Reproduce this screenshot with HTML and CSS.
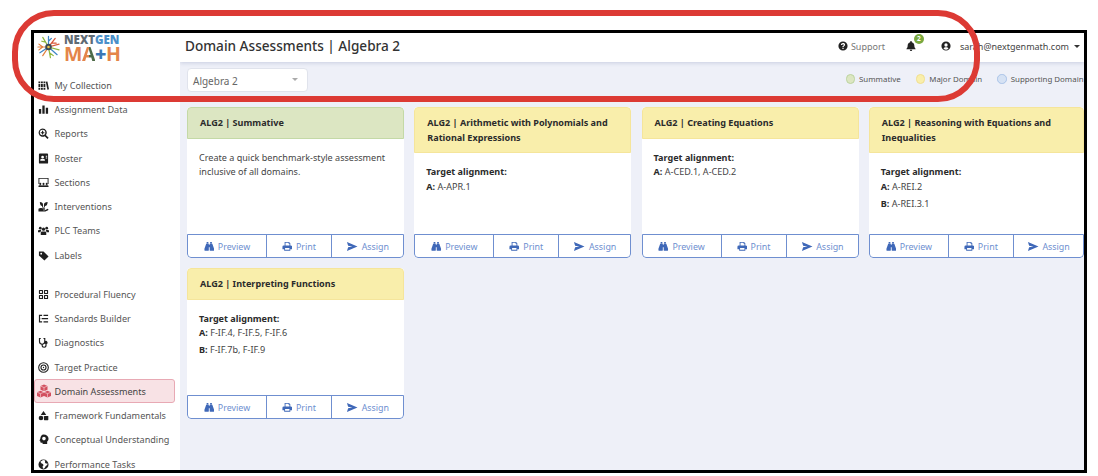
FILE: index.html
```html
<!DOCTYPE html>
<html lang="en">
<head>
<meta charset="utf-8">
<title>Domain Assessments | Algebra 2</title>
<link rel="stylesheet" href="styles.css">
</head>
<body>
<svg class="defs" width="0" height="0" aria-hidden="true">
  <symbol id="i-binoculars" viewBox="0 0 24 24"><path d="M6 2h4v3.500H6zM14 2h4v3.500h-4zM5 6.500h6V21a1 1 0 0 1-1 1H2a1 1 0 0 1-1-1v-3.500zM13 6.500h6l4 11V21a1 1 0 0 1-1 1h-8a1 1 0 0 1-1-1zM11 8.500h2V14h-2z"/></symbol>
  <symbol id="i-print" viewBox="0 0 24 24"><path fill-rule="evenodd" d="M6 2h10l3 3v5h1a3 3 0 0 1 3 3v6h-4v3H5v-3H1v-6a3 3 0 0 1 3-3h2zm2 2v6h9V6h-2V4zM7 16v4h10v-4z"/></symbol>
  <symbol id="i-plane" viewBox="0 0 24 24"><path d="M1 2l23 10L1 22l2.500-8.500L13 12l-9.500-1.500z"/></symbol>
</svg>

<div class="frame">
  <aside class="sidebar">
    <div class="logo">
      <svg class="logo-mark" viewBox="0 0 24 24" aria-hidden="true">
        <g stroke-width="1.300" stroke-linecap="round" fill="none">
          <path stroke="#e2803f" d="M12 12L1 12M6 12L2 9M6 12L2 15M12 12L6 21"/>
          <path stroke="#8fb63f" d="M12 12L6 2M9 7L5 6M12 12L14 23M13 18L17 21M12 12L23 15"/>
          <path stroke="#3f86c6" d="M12 12L12 1M12 6L15 3M12 12L3 18M12 12L21 20"/>
          <path stroke="#d9583a" d="M12 12L19 3M15 8L20 8M12 12L23 9"/>
        </g>
        <circle cx="12" cy="12" r="3.400" fill="#3a4a55"/>
        <circle cx="12" cy="12" r="1.400" fill="#e8c24a"/>
      </svg>
      <div class="logo-text">
        <div class="logo-top"><span class="lg-gray">NEXT</span><span class="lg-blue">GEN</span></div>
        <div class="logo-bottom">M<span class="lg-a">A</span><span class="lg-plus">+</span>H</div>
      </div>
    </div>

    <nav class="nav">
      <a class="nav-item"><svg class="nav-icon" viewBox="0 0 24 24"><path d="M1 3h4v18H1zM6.500 3h4v18h-4zM12 3h4v18h-4z"/><path d="M17 4l3.500-1 3.500 17-3.500 1z"/><path class="knock" d="M0 7h17v1.500H0zM0 16h17v1.500H0z"/></svg>My Collection</a>
      <a class="nav-item"><svg class="nav-icon" viewBox="0 0 24 24"><path d="M2 11h5v10H2zM9.500 3h5v18h-5zM17 8h5v13h-5z"/></svg>Assignment Data</a>
      <a class="nav-item"><svg class="nav-icon" viewBox="0 0 24 24"><path fill-rule="evenodd" d="M10 1a9 9 0 0 1 7.200 14.400l6 6-2.500 2.500-6-6A9 9 0 1 1 10 1zm0 3a6 6 0 1 0 0 12 6 6 0 0 0 0-12z"/><path d="M6 9h8v2.500H6zM8.800 6h2.500v8H8.800z"/></svg>Reports</a>
      <a class="nav-item"><svg class="nav-icon" viewBox="0 0 24 24"><path fill-rule="evenodd" d="M4 1h16a2 2 0 0 1 2 2v18a2 2 0 0 1-2 2H4a2 2 0 0 1-2-2V3a2 2 0 0 1 2-2zm6 5a3 3 0 1 0 0 6 3 3 0 0 0 0-6zm-5 11h10v-2a2 2 0 0 0-2-2H7a2 2 0 0 0-2 2zM17 6v2h3V6zm0 4v2h3v-2z"/></svg>Roster</a>
      <a class="nav-item"><svg class="nav-icon" viewBox="0 0 24 24"><path fill-rule="evenodd" d="M1 2h22v13h-2V4H3v11H1z"/><circle cx="5" cy="15" r="2.200"/><circle cx="12" cy="15" r="2.200"/><circle cx="19" cy="15" r="2.200"/><path d="M1 22v-2a2 2 0 0 1 2-2h4a2 2 0 0 1 2 2v2zM8.500 22v-2a2 2 0 0 1 2-2h3a2 2 0 0 1 2 2v2zM15 22v-2a2 2 0 0 1 2-2h4a2 2 0 0 1 2 2v2z"/></svg>Sections</a>
      <a class="nav-item"><svg class="nav-icon" viewBox="0 0 24 24"><path d="M4 2c4 0 7 2 7 6v5h2V8c0-4 3-5 8-6 0 5-2 9-6 9v3H9v-3C6 11 4 7 4 2z"/><path d="M1 17c3-2 5-2 8-1h5c2 0 2 3 0 3h-3v1h4l6-3c2 0 2 2 1 3l-6 3H1z"/></svg>Interventions</a>
      <a class="nav-item"><svg class="nav-icon" viewBox="0 0 24 24"><circle cx="5" cy="7" r="3"/><circle cx="19" cy="7" r="3"/><circle cx="12" cy="9" r="3.500"/><path d="M0 16v-3a2 2 0 0 1 2-2h4l1 1-2 4zM24 16v-3a2 2 0 0 0-2-2h-4l-1 1 2 4zM6 22v-5a3 3 0 0 1 3-3h6a3 3 0 0 1 3 3v5z"/></svg>PLC Teams</a>
      <a class="nav-item nav-gap-after"><svg class="nav-icon" viewBox="0 0 24 24"><path fill-rule="evenodd" d="M2 3h10l11 11-9 9L2 12zm5 3a2 2 0 1 0 0 4 2 2 0 0 0 0-4z"/></svg>Labels</a>
      <a class="nav-item"><svg class="nav-icon" viewBox="0 0 24 24"><path fill-rule="evenodd" d="M3 2h7a1 1 0 0 1 1 1v7a1 1 0 0 1-1 1H3a1 1 0 0 1-1-1V3a1 1 0 0 1 1-1zm1.500 2.500v4h4v-4zM14 2h7a1 1 0 0 1 1 1v7a1 1 0 0 1-1 1h-7a1 1 0 0 1-1-1V3a1 1 0 0 1 1-1zm1.500 2.500v4h4v-4zM3 13h7a1 1 0 0 1 1 1v7a1 1 0 0 1-1 1H3a1 1 0 0 1-1-1v-7a1 1 0 0 1 1-1zm1.500 2.500v4h4v-4zM14 13h7a1 1 0 0 1 1 1v7a1 1 0 0 1-1 1h-7a1 1 0 0 1-1-1v-7a1 1 0 0 1 1-1zm1.500 2.500v4h4v-4z"/></svg>Procedural Fluency</a>
      <a class="nav-item"><svg class="nav-icon" viewBox="0 0 24 24"><path d="M2 4h7v2.500H2zM12 4h10v2.500H12zM2 11h3v2.500H2zM8 11h14v2.500H8zM2 18h7v2.500H2zM12 18h10v2.500H12zM2 4h2.500v16.500H2z"/></svg>Standards Builder</a>
      <a class="nav-item"><svg class="nav-icon" viewBox="0 0 24 24"><path d="M2 2h4v2.500H4.500V10a4.500 4.500 0 0 0 9 0V4.500H12V2h4v8a7 7 0 0 1-5.800 6.900V18a3 3 0 0 0 6 0v-2.500a3.500 3.500 0 1 1 2.600 0V18a5.500 5.500 0 0 1-11 0v-1.100A7 7 0 0 1 2 10z"/></svg>Diagnostics</a>
      <a class="nav-item"><svg class="nav-icon nav-icon-rings" viewBox="0 0 24 24"><circle cx="12" cy="12" r="10.500"/><circle cx="12" cy="12" r="5.500"/><circle class="bullseye" cx="12" cy="12" r="1.500"/></svg>Target Practice</a>
      <a class="nav-item is-active"><svg class="nav-icon" viewBox="0 0 24 24"><path d="M12 1l6 2.500v6.500l-6 2.500-6-2.500V3.500zM6 11.500l6 2.500v6.500L6 23 0 20.500V14zM18 11.500l6 2.500v6.500L18 23l-6-2.500V14z"/><path class="cube-lines" d="M6 3.500l6 2.500 6-2.500M12 6v6.500M0 14l6 2.500 6-2.500M6 16.500V23M12 14l6 2.500 6-2.500M18 16.500V23"/></svg>Domain Assessments</a>
      <a class="nav-item"><svg class="nav-icon" viewBox="0 0 24 24"><path d="M12 2l6 9H6z"/><circle cx="6.500" cy="17.500" r="5"/><rect x="13" y="13" width="9.500" height="9.500" rx="1"/></svg>Framework Fundamentals</a>
      <a class="nav-item"><svg class="nav-icon" viewBox="0 0 24 24"><path fill-rule="evenodd" d="M12 1c6.500 0 11 4 11 9.500 0 2.500-1 4.500-3 6V22H10v-3H7a2 2 0 0 1-2-2v-2.500H3l2-4C5.500 5 8 1 12 1zm1 5a4 4 0 0 0-4 4 4 4 0 0 0 4 4 4 4 0 0 0 4-4 4 4 0 0 0-4-4z"/></svg>Conceptual Understanding</a>
      <a class="nav-item"><svg class="nav-icon" viewBox="0 0 24 24"><path fill-rule="evenodd" d="M12 1a11 11 0 1 1 0 22 11 11 0 0 1 0-22zM5 6l3 4 3 1 1 3-2 2 1 5 3-1 3-5 3-2 1-3h-4l-2-3 1-4-5-1z"/></svg>Performance Tasks</a>
    </nav>
  </aside>

  <main class="main">
    <header class="topbar">
      <h1 class="page-title">Domain Assessments | Algebra 2</h1>
      <div class="top-actions">
        <span class="support">
          <svg class="top-icon" viewBox="0 0 24 24"><path fill-rule="evenodd" d="M12 1a11 11 0 1 1 0 22 11 11 0 0 1 0-22zm-1.500 15v3h3v-3zM12 5c-3 0-5 2-5 4.500h3c0-1 .8-1.700 2-1.700s2 .6 2 1.500c0 1.700-3.500 1.800-3.500 5.200h3c0-2.200 3.500-2.500 3.500-5.500C17 6.500 15 5 12 5z"/></svg>
          Support
        </span>
        <span class="bell">
          <svg class="top-icon" viewBox="0 0 24 24"><path d="M12 0a2 2 0 0 1 2 2v1c4 .8 6 4 6 8 0 4 1 5.500 3 8v1H1v-1c2-2.500 3-4 3-8 0-4 2-7.200 6-8V2a2 2 0 0 1 2-2zM9 21h6a3 3 0 0 1-6 0z"/></svg>
          <span class="badge">2</span>
        </span>
        <span class="user">
          <svg class="top-icon" viewBox="0 0 24 24"><path fill-rule="evenodd" d="M12 1a11 11 0 1 1 0 22 11 11 0 0 1 0-22zm0 4.500a4 4 0 1 0 0 8 4 4 0 0 0 0-8zm0 9.500c-2.800 0-5 1-6 2.800a8.500 8.500 0 0 0 12 0c-1-1.800-3.200-2.800-6-2.800z"/></svg>
          <span class="email">sarah@nextgenmath.com</span>
          <span class="caret caret-dark"></span>
        </span>
      </div>
    </header>

    <div class="filters">
      <div class="select">Algebra 2<span class="caret caret-light"></span></div>
      <ul class="legend">
        <li><span class="dot dot-green"></span>Summative</li>
        <li><span class="dot dot-yellow"></span>Major Domain</li>
        <li><span class="dot dot-blue"></span>Supporting Domain</li>
      </ul>
    </div>

    <section class="cards">
      <article class="card">
        <h2 class="card-head head-green">ALG2 | Summative</h2>
        <div class="card-body"><p>Create a quick benchmark-style assessment inclusive of all domains.</p></div>
        <div class="card-actions">
          <a class="act act-preview"><svg><use href="#i-binoculars"/></svg>Preview</a>
          <a class="act act-print"><svg><use href="#i-print"/></svg>Print</a>
          <a class="act act-assign"><svg><use href="#i-plane"/></svg>Assign</a>
        </div>
      </article>
      <article class="card">
        <h2 class="card-head head-yellow">ALG2 | Arithmetic with Polynomials and Rational Expressions</h2>
        <div class="card-body">
          <p class="target">Target alignment:</p>
          <p class="line"><b>A:</b> A-APR.1</p>
        </div>
        <div class="card-actions">
          <a class="act act-preview"><svg><use href="#i-binoculars"/></svg>Preview</a>
          <a class="act act-print"><svg><use href="#i-print"/></svg>Print</a>
          <a class="act act-assign"><svg><use href="#i-plane"/></svg>Assign</a>
        </div>
      </article>
      <article class="card">
        <h2 class="card-head head-yellow">ALG2 | Creating Equations</h2>
        <div class="card-body">
          <p class="target">Target alignment:</p>
          <p class="line"><b>A:</b> A-CED.1, A-CED.2</p>
        </div>
        <div class="card-actions">
          <a class="act act-preview"><svg><use href="#i-binoculars"/></svg>Preview</a>
          <a class="act act-print"><svg><use href="#i-print"/></svg>Print</a>
          <a class="act act-assign"><svg><use href="#i-plane"/></svg>Assign</a>
        </div>
      </article>
      <article class="card">
        <h2 class="card-head head-yellow">ALG2 | Reasoning with Equations and Inequalities</h2>
        <div class="card-body">
          <p class="target">Target alignment:</p>
          <p class="line"><b>A:</b> A-REI.2</p>
          <p class="line"><b>B:</b> A-REI.3.1</p>
        </div>
        <div class="card-actions">
          <a class="act act-preview"><svg><use href="#i-binoculars"/></svg>Preview</a>
          <a class="act act-print"><svg><use href="#i-print"/></svg>Print</a>
          <a class="act act-assign"><svg><use href="#i-plane"/></svg>Assign</a>
        </div>
      </article>
      <article class="card">
        <h2 class="card-head head-yellow">ALG2 | Interpreting Functions</h2>
        <div class="card-body">
          <p class="target">Target alignment:</p>
          <p class="line"><b>A:</b> F-IF.4, F-IF.5, F-IF.6</p>
          <p class="line"><b>B:</b> F-IF.7b, F-IF.9</p>
        </div>
        <div class="card-actions">
          <a class="act act-preview"><svg><use href="#i-binoculars"/></svg>Preview</a>
          <a class="act act-print"><svg><use href="#i-print"/></svg>Print</a>
          <a class="act act-assign"><svg><use href="#i-plane"/></svg>Assign</a>
        </div>
      </article>
    </section>
  </main>
</div>

<div class="callout"></div>
</body>
</html>
```

FILE: styles.css
```css
* { box-sizing: border-box; }
html, body { height: 100%; }
body {
  margin: 0;
  padding: 30px 11px 3px 31px;
  background: #fff;
  font-family: "Noto Sans", "Open Sans", sans-serif;
  font-size: 9px;
  color: #444;
  overflow: hidden;
}
.defs { position: absolute; }
p, h1, h2, ul { margin: 0; padding: 0; }

.frame {
  height: 443px;
  border: 3px solid #000;
  display: grid;
  grid-template-columns: 146px 1fr;
  overflow: hidden;
  background: #fff;
}

/* Sidebar */
.sidebar { background: #fff; min-width: 0; }
.logo { height: 40px; display: flex; align-items: flex-start; padding: 1px 0 0 3px; gap: 4px; }
.logo-mark { width: 23px; height: 24px; margin-top: 1px; flex: none; }
.logo-text { font-family: "Open Sans", sans-serif; font-weight: 800; line-height: 1; }
.logo-top { font-size: 11.500px; height: 11px; line-height: 11px; }
.lg-gray { color: #5f6b75; }
.lg-blue { color: #4a90c9; }
.logo-bottom { font-size: 19.500px; color: #e4854a; font-weight: 700; height: 15px; line-height: 15px; margin-top: 1px; letter-spacing: -.4px; }
.lg-a {
  background: linear-gradient(90deg, #e4854a 55%, #4e6a48 55%);
  -webkit-background-clip: text;
  background-clip: text;
  color: transparent;
}
.lg-plus { color: #3a78b5; font-weight: 800; }

.nav { display: flex; flex-direction: column; }
.nav-item {
  height: 24.3px;
  flex: none;
  display: flex;
  align-items: center;
  gap: 5.500px;
  padding-left: 4px;
  color: #555;
  font-size: 9.100px;
  white-space: nowrap;
}
.nav-gap-after { margin-bottom: 14.6px; }
.nav-icon { width: 11px; height: 11px; fill: #1f1f1f; flex: none; }
.nav-icon .knock { fill: #fff; }
.nav-icon-rings { fill: none; stroke: #1f1f1f; stroke-width: 2.400; }
.nav-icon-rings .bullseye { fill: #1f1f1f; stroke: none; }
.is-active {
  width: 141px;
  padding-left: 2px;
  gap: 3.500px;
  background: #f8e2e5;
  border: 1px solid #e8a9b4;
  border-radius: 3px;
  color: #444;
}
.is-active .nav-icon { width: 14px; height: 14px; fill: #d2505f; }
.cube-lines { fill: none; stroke: #f8e2e5; stroke-width: 1; }

/* Main */
.main { background: #eef0f8; min-width: 0; overflow: hidden; display: flex; flex-direction: column; }
.topbar {
  height: 29px;
  flex: none;
  background: #fff;
  display: flex;
  align-items: center;
  justify-content: space-between;
  padding: 0 4px 3px 5px;
  box-shadow: 0 1px 4px rgba(70, 80, 140, .22);
  position: relative;
}
.page-title { font-size: 13.600px; font-weight: 500; color: #333; white-space: nowrap; margin-top: -1px; }
.top-actions { display: flex; align-items: center; font-size: 9px; color: #555; }
.top-icon { width: 10px; height: 10px; fill: #222; flex: none; }
.support { display: flex; align-items: center; gap: 3px; color: #777; margin-right: 21px; }
.bell { position: relative; display: flex; margin-right: 25px; }
.badge {
  position: absolute;
  left: 8px;
  top: -7px;
  width: 10px;
  height: 10px;
  border-radius: 50%;
  background: #7aa83f;
  color: #fff;
  font-size: 6.500px;
  font-weight: 700;
  line-height: 10px;
  text-align: center;
}
.user { display: flex; align-items: center; gap: 9px; }
.email { color: #444; }
.caret { display: inline-block; width: 0; height: 0; border-left: 3px solid transparent; border-right: 3px solid transparent; }
.caret-dark { border-top: 3.500px solid #333; margin-left: -4px; }
.caret-light { border-top: 3.500px solid #aaa; margin-left: auto; margin-right: 9px; margin-bottom: 3px; }

.filters {
  height: 45px;
  flex: none;
  display: flex;
  align-items: flex-start;
  justify-content: space-between;
  padding: 6px 0 0 7px;
}
.select {
  width: 121px;
  height: 24px;
  background: #fff;
  border: 1px solid #e0e3ec;
  border-radius: 4px;
  display: flex;
  align-items: center;
  padding-left: 5px;
  padding-top: 1px;
  color: #666;
  font-size: 10px;
}
.legend {
  list-style: none;
  display: flex;
  align-items: center;
  gap: 15px;
  margin-top: 6px;
  font-size: 7.900px;
  color: #555;
  white-space: nowrap;
  flex: none;
  width: 238.500px;
}
.legend li { display: flex; align-items: center; gap: 4px; }
.dot { width: 9.500px; height: 9.500px; border-radius: 50%; border: 1px solid; flex: none; }
.dot-green { background: #dce6c2; border-color: #bcd4a0; }
.dot-yellow { background: #f9eeab; border-color: #f0df90; }
.dot-blue { background: #d6e2f4; border-color: #a9c3e8; }

/* Cards */
.cards {
  display: grid;
  grid-template-columns: 217.200px 217.200px 217.200px 215px;
  grid-template-rows: 151px 151px;
  column-gap: 10.100px;
  row-gap: 10px;
  padding-left: 7px;
}
.card {
  background: #fff;
  border-radius: 4px;
  display: flex;
  flex-direction: column;
  min-width: 0;
  overflow: hidden;
}
.card-head {
  font-size: 9.070px;
  font-weight: 700;
  color: #2b2b2b;
  line-height: 14.500px;
  padding: 8px 12px 7px 12px;
  border: 1px solid;
  border-radius: 4px 4px 0 0;
}
.head-green { background: #dce6c2; border-color: #c4d9a6; }
.head-yellow { background: #f9eeab; border-color: #f5e59b; }
.card-body { flex: 1; padding: 12px 12px 0; line-height: 14.500px; color: #444; font-size: 9.070px; }
.target { font-weight: 700; color: #2b2b2b; }
.line { margin-bottom: 2.500px; }
.line b { color: #2b2b2b; }

.card-actions {
  height: 24px;
  flex: none;
  display: grid;
  grid-template-columns: 78px 65px 1fr;
  border: 1px solid #6f8fd0;
  border-radius: 0 0 4px 4px;
  background: #fff;
}
.act {
  display: flex;
  align-items: center;
  justify-content: center;
  gap: 3.500px;
  color: #6e8fd0;
  font-size: 8.900px;
}
.act + .act { border-left: 1px solid #6f8fd0; }
.act svg { width: 10.500px; height: 10.500px; fill: #3f68b8; flex: none; }
.act-assign svg { width: 12px; height: 11px; }

/* Highlight annotation drawn over the screenshot */
.callout {
  position: absolute;
  left: 12px;
  top: 10px;
  width: 968px;
  height: 92px;
  border: 6.500px solid #dc3a34;
  border-radius: 42px;
  pointer-events: none;
}
```
